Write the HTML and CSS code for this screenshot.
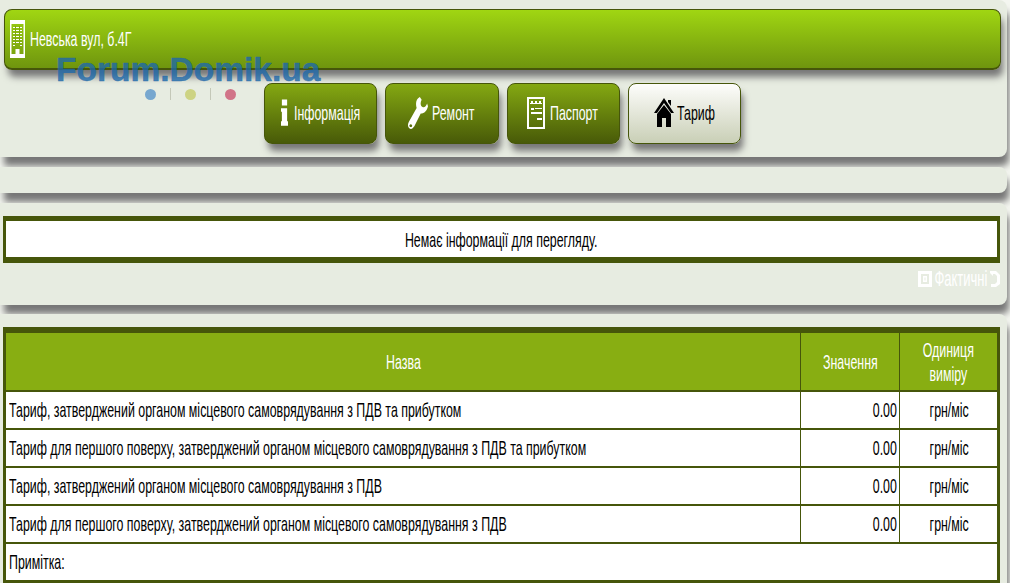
FILE: index.html
```html
<!DOCTYPE html>
<html lang="uk">
<head>
    <meta charset="UTF-8">
    <title>Невська вул, б.4Г</title>
    <link rel="stylesheet" href="styles.css">
</head>
<body>
    <div class="panel panel-top">
        <div class="address-bar">
            <svg class="icon-building" viewBox="0 0 15 38"><path fill="#fff" fill-rule="evenodd" d="M0 0h15v38H0zM1.500 4v30h4v-5h4v5h4V4z"/><path fill="#fff" d="M3 7h9v1H3zM3 10h9v1H3zM3 13h9v1H3zM3 16h9v1H3zM3 19h9v1H3zM3 22h9v1H3zM3 25h2v1H3zM10 25h2v1h-2zM6 30h3v5H6z"/><path fill="#7fa80f" d="M5 6h1v18H5zM9 6h1v18H9z"/></svg>
            <span class="txt txt-left">Невська вул, б.4Г</span>
        </div>
        <div class="watermark">
            <span class="watermark-name">Forum.Domik.ua</span>
            <div class="watermark-dots">
                <i class="dot dot-blue"></i><i class="sep"></i><i class="dot dot-yellow"></i><i class="sep"></i><i class="dot dot-red"></i>
            </div>
        </div>
        <nav class="tabs">
            <a class="tab tab-info">
                <svg class="tab-icon" width="7" height="31" viewBox="0 0 8 30"><path fill="#fff" d="M1 0h6v7H1zM0 10h7v15h1v5H0v-5h1V14H0z"/></svg>
                <span class="txt txt-left">Інформація</span>
            </a>
            <a class="tab tab-repair">
                <svg class="tab-icon" width="20" height="34" viewBox="0 0 22 35"><path fill="#fff" fill-rule="evenodd" d="M13 0C9 2 8 7 9.500 12L1 27C-1 31 0 34 3 35 5 35 6 33 7 32L14 18C18 18 21 15 22 10L21 7C20 10 18 12 16 11 14 10 13 7 15 3ZM3 30a1.500 1.500 0 1 0 .1 0z"/></svg>
                <span class="txt txt-left">Ремонт</span>
            </a>
            <a class="tab tab-passport">
                <svg class="tab-icon" width="18" height="32" viewBox="0 0 18 32"><path fill="#fff" fill-rule="evenodd" d="M0 0h18v32H0zM2 2v28h14V2z"/><path fill="#fff" d="M4 4h2v2H4zM8 4h2v2H8zM12 4h2v2h-2zM3 6h12v1H3zM4 11h3v2H4zM8 11h7v1H8zM4 15h11v2H4zM10 21h5v2h-5z"/></svg>
                <span class="txt txt-left">Паспорт</span>
            </a>
            <a class="tab tab-tariff tab-active">
                <svg class="tab-icon" width="20" height="29" viewBox="0 0 20 29"><path fill="#000" d="M10 0l10 15h-3L10 5 3 15H0zM14 2h3v6l-3-4zM10 7l7 9v13h-5v-9H8v9H3V16z"/></svg>
                <span class="txt txt-left">Тариф</span>
            </a>
        </nav>
    </div>

    <div class="panel panel-empty"></div>

    <div class="panel panel-info">
        <div class="notice"><span class="txt">Немає інформації для перегляду.</span></div>
        <div class="actual">
            <svg width="14" height="18" viewBox="0 0 14 18"><path fill="#fff" fill-rule="evenodd" d="M0 1h14v16H0zM3 4v10h8V4z"/><path fill="#fff" fill-rule="evenodd" d="M5 6h4v6H5zM6.500 7.500v3h1v-3z"/></svg>
            <span class="txt txt-actual">Фактичні</span>
            <svg width="10" height="18" viewBox="0 0 10 18"><path fill="#fff" d="M0 1h6l4 4v9l-4 3H1v-3h4l2-2V6L5 4H3v2L0 3z"/></svg>
        </div>
    </div>

    <div class="panel panel-table">
        <table class="tariff">
            <colgroup>
                <col>
                <col class="col-value">
                <col class="col-unit">
            </colgroup>
            <thead>
                <tr>
                    <th><span class="txt">Назва</span></th>
                    <th><span class="txt">Значення</span></th>
                    <th><span class="txt">Одиниця<br>виміру</span></th>
                </tr>
            </thead>
            <tbody>
                <tr>
                    <td><span class="txt txt-left">Тариф, затверджений органом місцевого самоврядування з ПДВ та прибутком</span></td>
                    <td class="num"><span class="txt txt-right">0.00</span></td>
                    <td class="unit"><span class="txt">грн/міс</span></td>
                </tr>
                <tr>
                    <td><span class="txt txt-left">Тариф для першого поверху, затверджений органом місцевого самоврядування з ПДВ та прибутком</span></td>
                    <td class="num"><span class="txt txt-right">0.00</span></td>
                    <td class="unit"><span class="txt">грн/міс</span></td>
                </tr>
                <tr>
                    <td><span class="txt txt-left">Тариф, затверджений органом місцевого самоврядування з ПДВ</span></td>
                    <td class="num"><span class="txt txt-right">0.00</span></td>
                    <td class="unit"><span class="txt">грн/міс</span></td>
                </tr>
                <tr>
                    <td><span class="txt txt-left">Тариф для першого поверху, затверджений органом місцевого самоврядування з ПДВ</span></td>
                    <td class="num"><span class="txt txt-right">0.00</span></td>
                    <td class="unit"><span class="txt">грн/міс</span></td>
                </tr>
                <tr class="note-row">
                    <td colspan="3"><span class="txt txt-left">Примітка:</span></td>
                </tr>
            </tbody>
        </table>
    </div>
</body>
</html>
```

FILE: styles.css
```css
html, body {
    margin: 0;
    height: 583px;
    overflow: hidden;
}

body {
    background: #f4f6f0;
    font-family: "Liberation Sans", Arial, sans-serif;
    font-size: 21px;
    color: #000;
}

/* the source page is squeezed sideways, so text is narrowed here */
.txt {
    display: inline-block;
    white-space: nowrap;
    transform: scaleX(0.59);
    transform-origin: center;
}

.txt-left {
    transform-origin: left center;
}

.txt-right {
    transform-origin: right center;
}

.panel {
    position: relative;
    width: 1007px;
    background: #e7ece1;
    border-radius: 0 8px 8px 0;
    box-shadow: 3px 10px 7px -1px #777;
    box-sizing: border-box;
}

.panel-top {
    height: 157px;
    padding: 9px 6px 0 4px;
}

.panel-empty {
    height: 26px;
    margin-top: 10px;
}

.panel-info {
    height: 102px;
    margin-top: 10px;
    padding: 13px 7px 0 3px;
}

.panel-table {
    height: 280px;
    margin-top: 9px;
    padding: 13px 7px 0 3px;
}

/* header */
.address-bar {
    display: flex;
    align-items: center;
    gap: 5px;
    box-sizing: border-box;
    height: 61px;
    padding-left: 5px;
    color: #fff;
    border: 1px solid #46560a;
    border-bottom-width: 2px;
    border-radius: 8px;
    background: linear-gradient(#a0d612, #6f950e);
    box-shadow: 3px 8px 7px -1px #777;
}

.icon-building {
    width: 15px;
    height: 38px;
    flex: none;
}

.watermark {
    position: absolute;
    left: 56px;
    top: 51px;
    width: 265px;
}

.watermark-name {
    display: block;
    font-size: 33.500px;
    line-height: 37px;
    font-weight: bold;
    color: rgba(30, 105, 170, 0.8);
    -webkit-text-stroke: 0.5px rgba(30, 105, 170, 0.8);
    white-space: nowrap;
}

.watermark-dots {
    display: flex;
    align-items: center;
    justify-content: center;
    gap: 14px;
    margin: 0 0 0 4px;
}

.dot {
    width: 11px;
    height: 11px;
    border-radius: 50%;
}

.dot-blue {
    background: #77a7cf;
}

.dot-yellow {
    background: #cdd383;
}

.dot-red {
    background: #d17488;
}

.sep {
    width: 1px;
    height: 12px;
    background: #c4c8b8;
}

.tabs {
    display: flex;
    gap: 8px;
    margin: 13px 0 0 260px;
}

.tab {
    display: flex;
    align-items: center;
    box-sizing: border-box;
    width: 113.300px;
    height: 61px;
    padding-bottom: 2px;
    color: #fff;
    border: 1px solid #46560a;
    border-radius: 8px;
    background: linear-gradient(#84a812, #485a08);
    box-shadow: 3px 8px 7px -1px #777;
}

.tab-info {
    padding-left: 16px;
}

.tab-repair {
    padding-left: 22px;
}

.tab-passport {
    padding-left: 19px;
}

.tab-tariff {
    padding-left: 25px;
}

.tab-icon {
    flex: none;
    margin-right: 4px;
}

.tab-info .tab-icon {
    margin-right: 6px;
}

.tab-passport .tab-icon {
    margin-right: 5px;
}

.tab-tariff .tab-icon {
    margin-right: 3px;
}

.tab-active {
    color: #000;
    background: linear-gradient(#fdfdfb, #c9cfb6);
}

/* notice block */
.notice {
    box-sizing: border-box;
    height: 47px;
    line-height: 37px;
    text-align: center;
    background: #fff;
    border: solid #46560a;
    border-width: 5px 3px 6px;
}

.actual {
    display: flex;
    align-items: center;
    justify-content: flex-end;
    gap: 3px;
    height: 32px;
    padding-right: 0;
}

.txt-actual {
    color: #fff;
    font-size: 22px;
    margin: 0 -19px;
}

/* table */
.tariff {
    width: 997px;
    height: 256px;
    table-layout: fixed;
    border-collapse: collapse;
    background: #fff;
    border: solid #46560a;
    border-width: 6px 3px 4px;
}

.col-value {
    width: 99px;
}

.col-unit {
    width: 99px;
}

.tariff th {
    height: 57px;
    padding: 0;
    font-weight: normal;
    line-height: 24px;
    color: #fff;
    background: #88ae12;
    border-right: 1px solid #46560a;
    border-bottom: 2px solid #46560a;
}

.tariff td {
    height: 36px;
    padding: 0 2px 0 3px;
    border-right: 1px solid #46560a;
    border-bottom: 2px solid #46560a;
}

.tariff th:last-child,
.tariff td:last-child {
    border-right: 0;
}

.num {
    text-align: right;
}

.unit {
    text-align: center;
}

.note-row td {
    border-bottom: 0;
}
```
